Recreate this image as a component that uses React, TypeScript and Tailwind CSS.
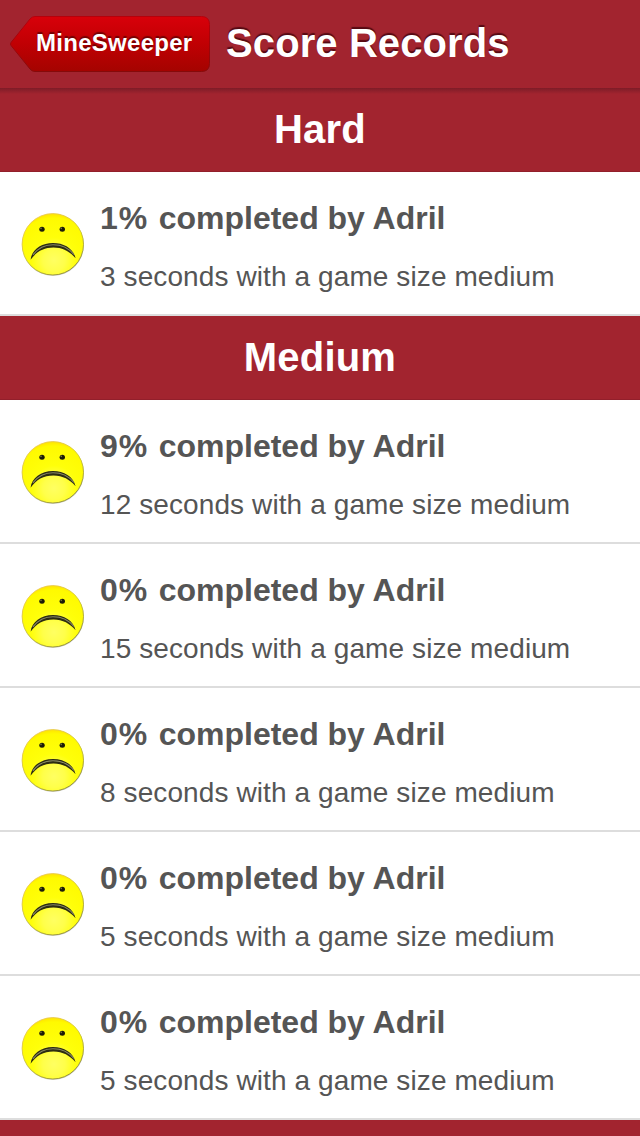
type Score = { percent: number; player: string; seconds: number; size: string };

const hardScores: Score[] = [{ percent: 1, player: "Adril", seconds: 3, size: "medium" }];

const mediumScores: Score[] = [
  { percent: 9, player: "Adril", seconds: 12, size: "medium" },
  { percent: 0, player: "Adril", seconds: 15, size: "medium" },
  { percent: 0, player: "Adril", seconds: 8, size: "medium" },
  { percent: 0, player: "Adril", seconds: 5, size: "medium" },
  { percent: 0, player: "Adril", seconds: 5, size: "medium" },
];

function SadFace() {
  return (
    <svg className="mt-[39px] size-[66px] shrink-0" viewBox="0 0 66 66" aria-hidden="true">
      <defs>
        <radialGradient id="face" cx="0.52" cy="0.76" r="0.82">
          <stop offset="0" stopColor="#ffff62" />
          <stop offset="0.22" stopColor="#ffff4a" />
          <stop offset="0.45" stopColor="#ffff0a" />
          <stop offset="0.84" stopColor="#fffa00" />
          <stop offset="1" stopColor="#ffd000" />
        </radialGradient>
        <linearGradient id="rim" x1="0.2" y1="0" x2="0.8" y2="1">
          <stop offset="0" stopColor="#efc860" />
          <stop offset="0.5" stopColor="#d2cb30" />
          <stop offset="1" stopColor="#84823a" />
        </linearGradient>
      </defs>
      <circle cx="33" cy="33.8" r="31" fill="#000" opacity="0.22" />
      <circle cx="32.8" cy="33.3" r="30.7" fill="url(#face)" stroke="url(#rim)" strokeWidth="0.9" />
      <ellipse cx="22" cy="18.3" rx="2.7" ry="2.5" fill="#1c1c08" />
      <ellipse cx="42.3" cy="18.3" rx="2.7" ry="2.5" fill="#1c1c08" />
      <circle cx="21" cy="17.4" r="0.8" fill="#77783c" />
      <circle cx="41.3" cy="17.4" r="0.8" fill="#77783c" />
      <path
        d="M10.6 48.8C11.6 38.8 21 31.9 33 31.9C44 31.9 53.2 37.2 55.6 47.2C49.8 40.7 42.8 36.6 33.5 36.6C23.5 36.6 16.2 40.8 10.6 48.8Z"
        fill="#2c2c12"
      />
      <path d="M12.9 43.8C18.4 36.6 25.2 33.7 33 33.7C41.3 33.7 48.4 36.6 53.8 43.4" fill="none" stroke="#8a8a68" strokeWidth="1.1" />
    </svg>
  );
}

function SectionHeader({ title }: { title: string }) {
  return (
    <h2 className="flex h-[84px] items-center justify-center border-b border-[#921f2b] bg-[#a2242f] pb-0.5 text-[40px] leading-[48px] font-bold tracking-[0.2px] text-white">
      {title}
    </h2>
  );
}

function ScoreRow({ percent, player, seconds, size }: Score) {
  return (
    <li className="flex h-36 border-b-2 border-[#dddddd] bg-white pl-5 text-[#555555]">
      <SadFace />
      <div className="flex flex-col pt-[27px] pl-3.5 whitespace-nowrap">
        <h3 className="text-[32px] leading-[38px] font-bold">
          <span className="mr-[1.5px] tracking-[1px]">{percent}%</span>
          {` completed by ${player}`}
        </h3>
        <p className="mt-[23px] text-[28px] leading-[34px] tracking-[0.1px]">
          {`${seconds} seconds with a game size ${size}`}
        </p>
      </div>
    </li>
  );
}

function BackButton() {
  return (
    <button className="relative ml-2.5 flex h-14 w-[200px] items-center pb-0.5 pl-[26px] text-[24px] leading-7 font-bold tracking-[0.28px] text-white">
      <svg className="absolute inset-0 h-14 w-[200px]" viewBox="0 0 200 56" aria-hidden="true">
        <defs>
          <linearGradient id="button" x1="0" y1="0" x2="0" y2="1">
            <stop offset="0" stopColor="#d8000a" />
            <stop offset="0.5" stopColor="#c00003" />
            <stop offset="1" stopColor="#a40300" />
          </linearGradient>
          <linearGradient id="edge" x1="0" y1="0" x2="0" y2="1">
            <stop offset="0" stopColor="#b7000b" />
            <stop offset="1" stopColor="#850b0b" />
          </linearGradient>
        </defs>
        <path
          d="M25 .5H191.5Q199.5 .5 199.5 8.5V47.5Q199.5 55.5 191.5 55.5H25Q22 55.5 20 53L1 29.5Q0 28 1 26.5L20 3Q22 .5 25 .5Z"
          fill="url(#button)"
          stroke="url(#edge)"
        />
      </svg>
      <span className="relative [text-shadow:0_-2px_1px_rgba(60,0,0,0.6)]">MineSweeper</span>
    </button>
  );
}

export default function App() {
  return (
    <main className="h-[1136px] w-[640px] overflow-hidden bg-[#a2242f] font-['Liberation_Sans',Arial,sans-serif]">
      <header className="flex h-[88px] items-center bg-[#a2242f]">
        <BackButton />
        <h1 className="ml-4 pb-0.5 text-[40px] leading-[48px] font-bold tracking-[0.1px] whitespace-nowrap text-white [text-shadow:0_-2px_1px_rgba(60,0,10,0.75)]">
          Score Records
        </h1>
      </header>
      <section className="relative">
        <SectionHeader title="Hard" />
        <div className="absolute inset-x-0 top-0 h-1.5 bg-linear-to-b from-[#7e1c27] to-[#a2242f]" />
        <ul>
          {hardScores.map((score, i) => (
            <ScoreRow key={i} {...score} />
          ))}
        </ul>
      </section>
      <section>
        <SectionHeader title="Medium" />
        <ul>
          {mediumScores.map((score, i) => (
            <ScoreRow key={i} {...score} />
          ))}
        </ul>
      </section>
    </main>
  );
}
